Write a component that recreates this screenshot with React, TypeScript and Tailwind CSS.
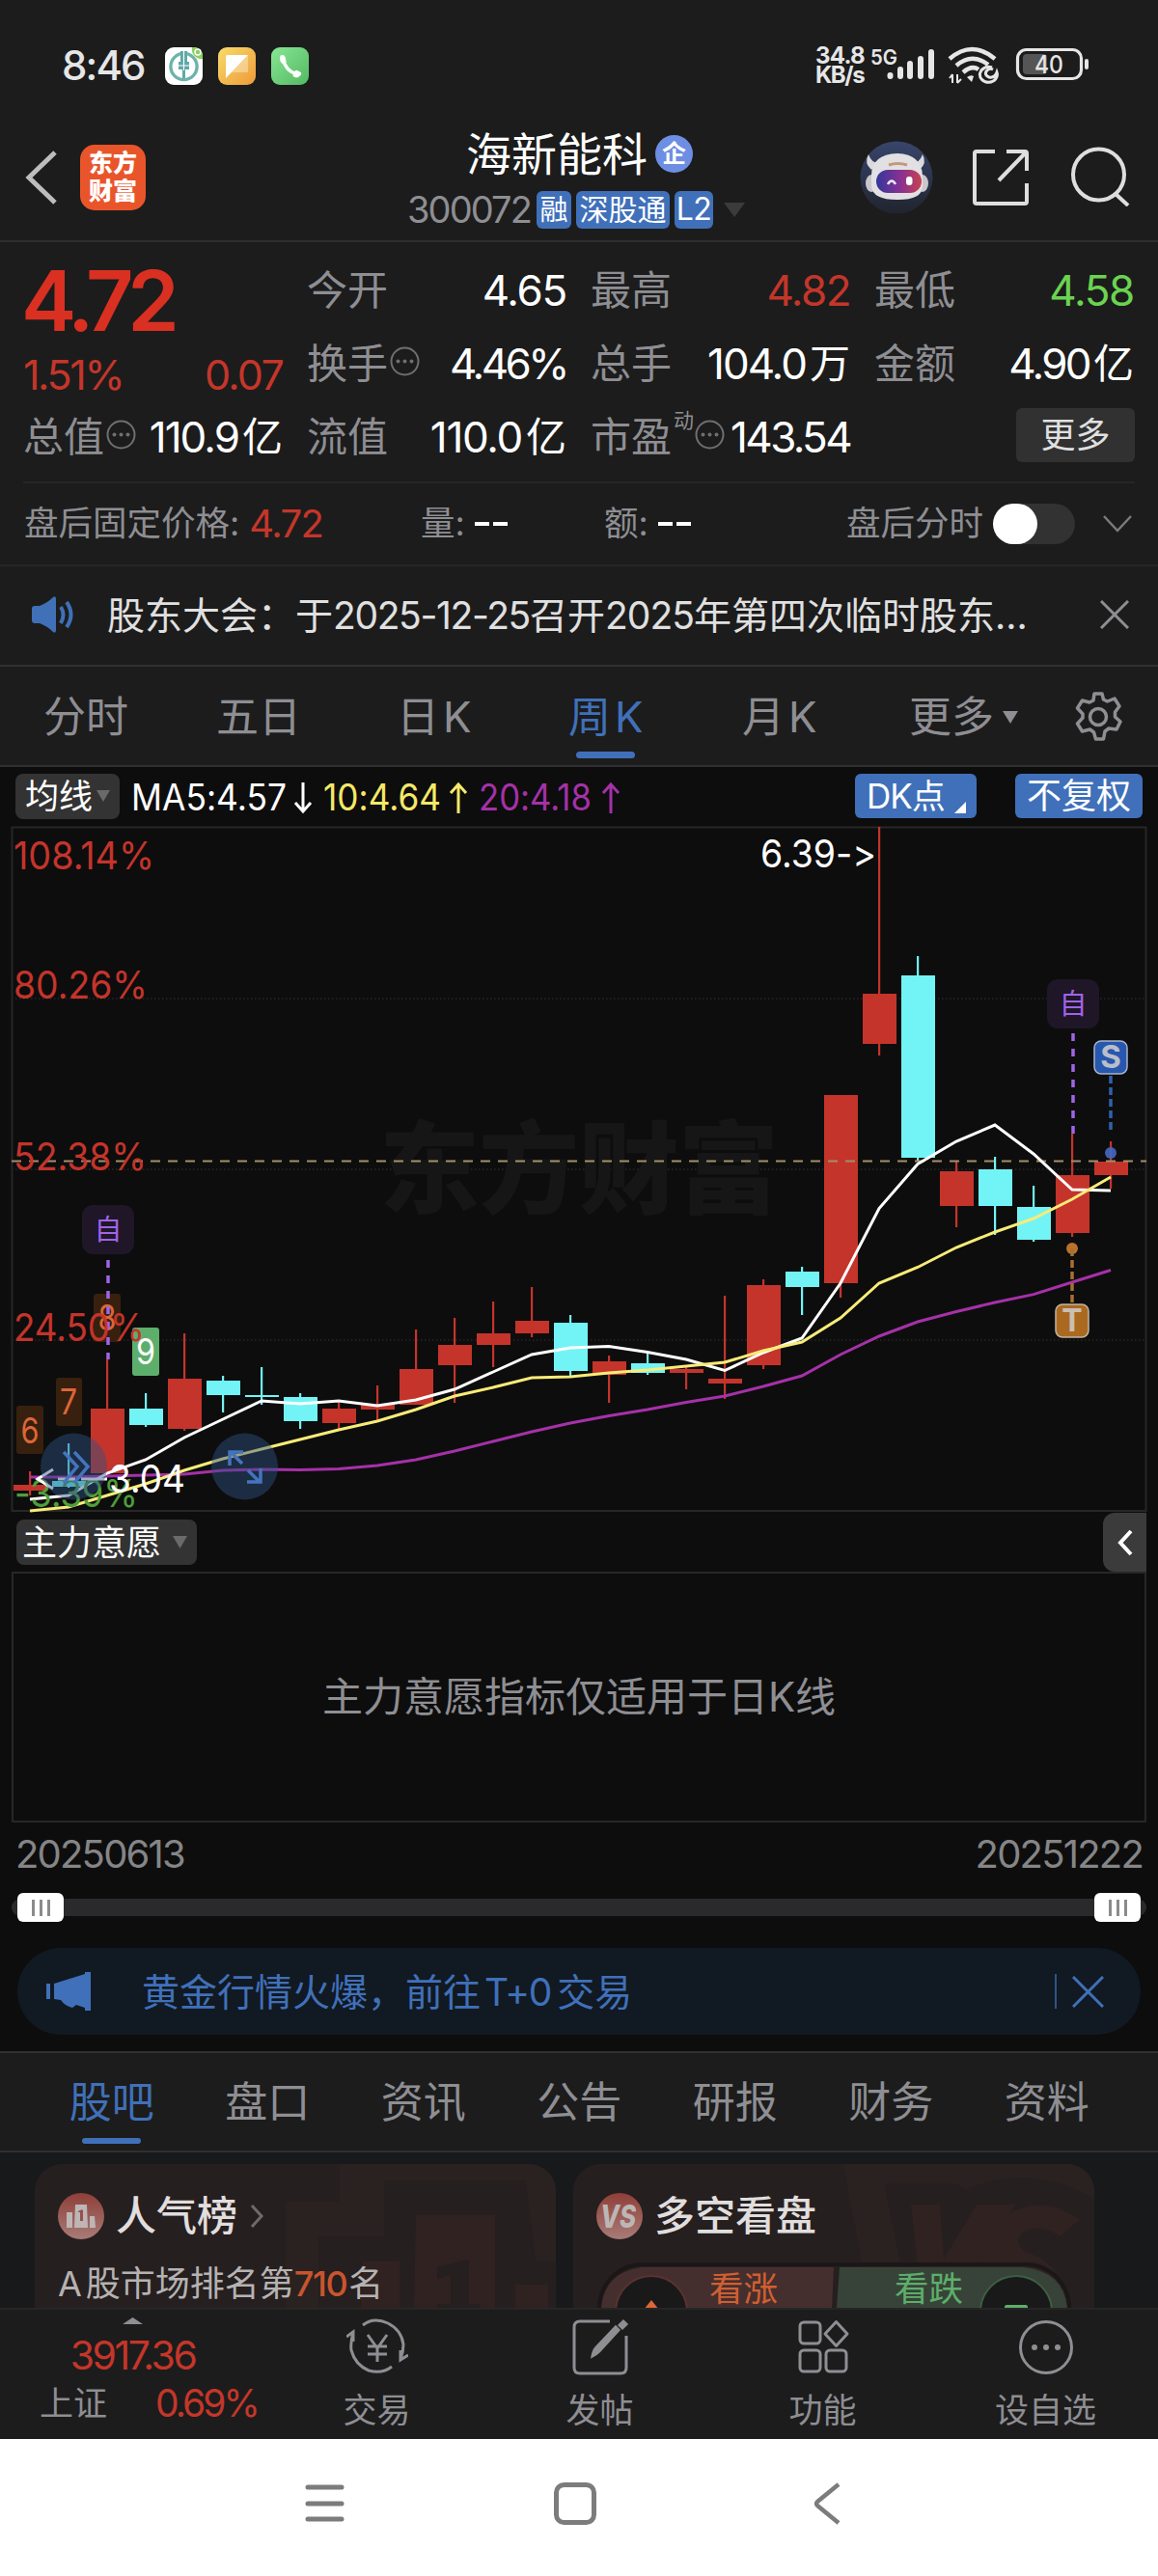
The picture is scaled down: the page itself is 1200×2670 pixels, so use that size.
import React from 'react'
import { clsx } from 'clsx'

// [body top, body bottom, wick top, wick bottom, up?]
const candles: [number, number, number, number, boolean][] = [
    [1539, 1545, 1525, 1550, true],
    [1535, 1541, 1496, 1542, false],
    [1460, 1527, 1409, 1527, true],
    [1460, 1477, 1444, 1479, false],
    [1429, 1481, 1382, 1483, true],
    [1431, 1446, 1426, 1464, false],
    [1446, 1448, 1417, 1456, false],
    [1448, 1473, 1444, 1481, false],
    [1460, 1475, 1454, 1481, true],
    [1456, 1461, 1436, 1472, true],
    [1419, 1456, 1378, 1456, true],
    [1394, 1415, 1366, 1454, true],
    [1382, 1394, 1349, 1417, true],
    [1369, 1382, 1334, 1386, true],
    [1371, 1421, 1363, 1426, false],
    [1411, 1425, 1405, 1454, true],
    [1413, 1423, 1402, 1425, false],
    [1419, 1423, 1417, 1440, true],
    [1429, 1434, 1343, 1450, true],
    [1332, 1415, 1326, 1419, true],
    [1318, 1334, 1313, 1363, false],
    [1135, 1330, 1135, 1345, true],
    [1030, 1082, 857, 1094, true],
    [1011, 1200, 991, 1204, false],
    [1214, 1250, 1204, 1272, true],
    [1212, 1250, 1199, 1280, false],
    [1251, 1285, 1229, 1287, false],
    [1218, 1278, 1175, 1282, true],
    [1204, 1218, 1183, 1232, true],
]

const ma5 = [1554, 1550, 1527, 1513, 1490, 1471, 1452, 1455, 1452, 1457, 1451, 1440, 1422, 1404, 1397, 1395.5, 1401.5, 1409, 1420.5, 1402, 1387, 1330, 1252.5, 1206.5, 1183, 1166, 1196, 1233, 1234]
const ma10 = [1566, 1562, 1550, 1538, 1524, 1512, 1502, 1492, 1482, 1473, 1461, 1447, 1438, 1428, 1427, 1423, 1420, 1416, 1412, 1400, 1391, 1366, 1330, 1313.5, 1293, 1277, 1263, 1243, 1220]
const ma20 = [1531, 1531, 1530, 1529, 1528, 1524, 1523, 1523.5, 1522.5, 1519, 1513, 1504, 1494, 1484, 1475, 1467.5, 1461, 1453.5, 1447, 1437, 1426, 1404, 1385, 1370, 1359.5, 1350, 1341.6, 1329, 1316.5]

const cx = (i: number) => 31 + i * 40
const line = (ys: number[]) => ys.map((y, i) => `${cx(i)},${y}`).join(' ')

const StatusBar = () => {
    return (
        <div className="flex h-[100px] items-center pt-9 pl-[64px] pr-[71px] text-[#e6e6e6]">
            <div className="w-[107px] text-[42px] leading-none font-medium tracking-[-0.045em]">8:46</div>
            <div className="flex gap-4">
                <svg width="39" height="39" viewBox="0 0 39 39">
                    <rect width="39" height="39" rx="9" fill="#fff" />
                    <path d="M28 0h2a9 9 0 0 1 9 9v3a10 10 0 0 1-11-12z" fill="#8bd060" />
                    <circle cx="34" cy="5" r="3" fill="none" stroke="#fff" strokeWidth="1.4" />
                    <circle cx="19.5" cy="20" r="13.6" fill="none" stroke="#6db3ab" strokeWidth="3.4" />
                    <path d="M16 4h7v11h2v8h-4v9h-3v-9h-4v-8h2z" fill="#5fa9a6" />
                    <path d="M19.5 4v20M14 19h11" stroke="#fff" strokeWidth="1.1" />
                </svg>
                <svg width="39" height="39" viewBox="0 0 39 39">
                    <defs>
                        <linearGradient id="note" x1="0" y1="0" x2="1" y2="1">
                            <stop offset="0" stopColor="#f7dc6a" />
                            <stop offset="1" stopColor="#ee9a3a" />
                        </linearGradient>
                    </defs>
                    <rect width="39" height="39" rx="9" fill="url(#note)" />
                    <path d="M31 8v18H14z" fill="#fff" opacity=".35" />
                    <path d="M8 9.500q0-1.500 1.500-1.500H31L8 32z" fill="#fff" />
                </svg>
                <svg width="39" height="39" viewBox="0 0 39 39">
                    <defs>
                        <linearGradient id="call" x1="0" y1="0" x2="1" y2="1">
                            <stop offset="0" stopColor="#86e794" />
                            <stop offset="1" stopColor="#55b862" />
                        </linearGradient>
                    </defs>
                    <rect width="39" height="39" rx="9" fill="url(#call)" />
                    <path d="M12.500 12.500C14 20 19 26 27 28" fill="none" stroke="#fff" strokeWidth="3.500" />
                    <path d="M9.500 8.500q4-1.500 5 1.500l1 4q.5 2-3 3.500-5-3-3-9zM23 27q2-4 4-3l3 1.500q2.500 1.500 0 4-3.500 3.500-7.500.5z" fill="#fff" />
                </svg>
            </div>
            <div className="ml-auto flex items-center">
                <div className="w-[54px] text-[24px] leading-[20px] font-bold tracking-[-0.03em] whitespace-nowrap">
                    <div>34.8</div>
                    <div className="tracking-[-0.06em]">KB/s</div>
                </div>
                <svg width="230" height="40" viewBox="899 49 230 40">
                    <text x="902" y="68" fontSize="22" fontWeight="600" fill="#e6e6e6" textLength="28" lengthAdjust="spacingAndGlyphs">5G</text>
                    <path d="M922.500 80v-1M933 80v-7M943 80v-13M954 80v-18M965 80v-25" stroke="#e6e6e6" strokeWidth="6" strokeLinecap="round" />
                    <g fill="none" stroke="#e6e6e6" strokeWidth="4.500">
                        <path d="M984 62q23-20 47 0M991 69q16-14 33-1M998 76q9-8 16-3" />
                        <path d="M1028 71a9 8 0 1 0 5 5q-2 6-8 5-5-2-3-6 3-4 7-2" strokeWidth="3" />
                        <path d="M987 78v9M992 78v9M984 82l3-4M992 87l4-4" strokeWidth="2" />
                    </g>
                    <path d="M1002 81q4-3 7-1l-2 6z" fill="#e6e6e6" />
                    <rect x="1054.500" y="52.500" width="66" height="30" rx="9" fill="none" stroke="#e6e6e6" strokeWidth="3.200" />
                    <rect x="1060" y="57" width="25" height="21" rx="4" fill="#555" />
                    <rect x="1124" y="62" width="4" height="11" rx="2" fill="#e6e6e6" />
                    <text x="1072" y="77" fontSize="26" fontWeight="500" fill="#e6e6e6" textLength="30" lengthAdjust="spacingAndGlyphs">40</text>
                </svg>
            </div>
        </div>
    )
}

const Header = () => {
    return (
        <div className="flex h-[151px] border-b-2 border-[#2e2e2f] pl-6">
            <svg className="mt-14 h-14 w-9" viewBox="0 0 36 56" fill="none" stroke="#bdbdbd" strokeWidth="5">
                <path d="M33 2L6 28l27 26" />
            </svg>
            <div className="mt-[50px] ml-[23px] flex h-[68px] w-[68px] flex-col items-center justify-center rounded-[15px] bg-[#e9552b] text-[25px] leading-[29px] font-black text-white">
                <span>东方</span>
                <span>财富</span>
            </div>
            <div className="mt-8 ml-[271px] w-[420px]">
                <div className="flex h-[54px] items-center pl-[61px] text-[47px] leading-none text-white">
                    海新能科
                    <span className="ml-2 flex h-[39px] w-[39px] items-center justify-center rounded-full bg-[#6d8ee2] text-[25px] font-bold">企</span>
                </div>
                <div className="mt-[11px] flex h-[40px] items-center text-[32px] leading-none text-white">
                    <span className="w-[134px] text-[38px] tracking-[-0.05em] text-[#8e8e93]">300072</span>
                    <span className="flex h-[39px] w-9 items-center justify-center rounded-md bg-[#4070b9] text-[29px]">融</span>
                    <span className="ml-[5px] flex h-[39px] w-[97px] items-center justify-center rounded-md bg-[#4070b9] text-[30px]">深股通</span>
                    <span className="ml-[5px] flex h-[39px] w-10 items-center justify-center rounded-md bg-[#4070b9] tracking-[-0.02em]">L2</span>
                    <svg className="ml-[11px]" width="22" height="15" viewBox="0 0 22 15"><path d="M0 0h22L11 15z" fill="#3b3b3b" /></svg>
                </div>
            </div>
            <svg className="mt-[46px] ml-[49px] shrink-0" width="76" height="76" viewBox="0 0 76 76">
                <defs>
                    <linearGradient id="visor" x1="0" y1="0" x2="1" y2="0">
                        <stop offset="0" stopColor="#33379c" />
                        <stop offset=".55" stopColor="#8a3191" />
                        <stop offset="1" stopColor="#c8414f" />
                    </linearGradient>
                    <linearGradient id="halo" x1="0" y1="0" x2="0" y2="1">
                        <stop offset="0" stopColor="#38456b" />
                        <stop offset="1" stopColor="#20242e" />
                    </linearGradient>
                </defs>
                <circle cx="38" cy="38" r="37.500" fill="url(#halo)" />
                <path d="M9 14q-5 9 3 16l8-7q-8 0-11-9zM65 14q5 9-3 16l-8-7q8 0 11-9z" fill="#dcd9dd" />
                <ellipse cx="12" cy="44" rx="6" ry="9" fill="#c9c6cc" />
                <ellipse cx="65" cy="44" rx="6" ry="9" fill="#c9c6cc" />
                <path d="M12 36q0-22 27-23 25 1 26 23v11q0 14-26 14T12 47z" fill="#e3e0e3" />
                <rect x="17" y="30" width="47" height="24" rx="12" fill="url(#visor)" />
                <path d="M30 25q9-3 19 0" stroke="#c09a7a" strokeWidth="3" fill="none" />
                <path d="M29 45q4-7 8 0" stroke="#ece6ff" strokeWidth="2.500" fill="none" />
                <rect x="48" y="37" width="6.500" height="9" rx="3" fill="#fff" />
            </svg>
            <svg className="mt-[54px] ml-10 shrink-0" width="60" height="60" viewBox="0 0 60 60" fill="none" stroke="#dedede" strokeWidth="4" strokeLinejoin="round">
                <path d="M24 3H5q-2 0-2 2v50q0 2 2 2h50q2 0 2-2V36M36 3h19q2 0 2 2v18M56 4L28 33" />
            </svg>
            <svg className="mt-[52px] ml-[43px] shrink-0" width="62" height="62" viewBox="0 0 62 62" fill="none" stroke="#dedede" strokeWidth="4">
                <circle cx="28.500" cy="29" r="26.500" />
                <path d="M46 49l13 12" />
            </svg>
        </div>
    )
}

const Dots = () => {
    return (
        <svg className="ml-[2px] -mt-[5px] shrink-0" width="31" height="31" viewBox="0 0 31 31" fill="#6f6f72">
            <circle cx="15.500" cy="15.500" r="14" fill="none" stroke="#6f6f72" strokeWidth="2" />
            <circle cx="8.500" cy="15.500" r="2" />
            <circle cx="15.500" cy="15.500" r="2" />
            <circle cx="22.500" cy="15.500" r="2" />
        </svg>
    )
}

const Quote = ({ label, value, unit, dots, sup, color = 'text-white', tight = 'tracking-[-0.045em]' }: any) => {
    return (
        <div className="flex h-[76px] w-[269px] items-center text-[42px] leading-none whitespace-nowrap">
            <span className="text-[#8e8e93]">{label}</span>
            {sup && <span className="-mt-9 ml-[2px] -mr-[1px] text-[21px] text-[#8e8e93]">{sup}</span>}
            {dots && <Dots />}
            <span className={clsx('ml-auto text-[44px]', tight, color)}>{value}</span>
            {unit && <span className="ml-1 text-white">{unit}</span>}
        </div>
    )
}

const QuotePanel = () => {
    return (
        <div className="mx-6 flex h-[250px] gap-[25px] border-b-2 border-[#262627] pt-3">
            <div className="w-[269px]">
                <div className="-ml-[2px] flex h-[98px] items-center text-[86px] leading-none font-semibold tracking-[-0.075em] text-[#d93022]">4.72</div>
                <div className="flex h-[54px] items-center justify-between text-[43px] leading-none tracking-[-0.055em] text-[#c4362a]">
                    <span>1.51%</span>
                    <span className="tracking-[-0.04em]">0.07</span>
                </div>
                <Quote label="总值" dots value="110.9" unit="亿" />
            </div>
            <div>
                <Quote label="今开" value="4.65" tight="tracking-[-0.03em]" />
                <Quote label="换手" dots value="4.46%" tight="tracking-[-0.08em]" />
                <Quote label="流值" value="110.0" unit="亿" tight="tracking-[-0.03em]" />
            </div>
            <div>
                <Quote label="最高" value="4.82" color="text-[#c4362a]" tight="tracking-[-0.035em]" />
                <Quote label="总手" value="104.0" unit="万" />
                <Quote label="市盈" sup="动" dots value="143.54" tight="tracking-[-0.06em]" />
            </div>
            <div>
                <Quote label="最低" value="4.58" color="text-[#6bd351]" tight="tracking-[-0.03em]" />
                <Quote label="金额" value="4.90" unit="亿" tight="tracking-[-0.06em]" />
                <div className="mt-[8px] ml-[147px] flex h-14 w-[123px] items-center justify-center rounded-md bg-[#313131] text-[36px] leading-none text-[#e0e0e0]">更多</div>
            </div>
        </div>
    )
}

const AfterHours = () => {
    return (
        <div className="flex h-[86px] items-center border-b-2 border-[#262627] pl-[25px] text-[35.500px] leading-none text-[#8e8e93]">
            <div className="flex w-[411px] items-center">盘后固定价格:<span className="ml-[10px] text-[40px] tracking-[-0.04em] text-[#c4362a]">4.72</span></div>
            <div className="flex w-[190px] items-center">量:<Dash /></div>
            <div className="flex w-[251px] items-center">额:<Dash /></div>
            <span>盘后分时</span>
            <div className="ml-[11px] h-[42px] w-[84px] rounded-full bg-[#323232]">
                <div className="-ml-px h-[42px] w-[46px] rounded-full bg-white"></div>
            </div>
            <svg className="ml-7" width="32" height="18" viewBox="0 0 32 18" fill="none" stroke="#7b7b7e" strokeWidth="2.500"><path d="M2 1l14 15L30 1" /></svg>
        </div>
    )
}

const Dash = () => {
    return (
        <span className="ml-[10px] flex gap-1">
            <i className="h-1 w-[15px] bg-white"></i>
            <i className="h-1 w-[15px] bg-white"></i>
        </span>
    )
}

const News = () => {
    return (
        <div className="flex h-[104px] items-center border-b-2 border-[#303031] pb-[2px] pl-8 text-[39px] leading-none text-[#e0e0e0]">
            <svg width="46" height="38" viewBox="0 0 46 38">
                <path d="M1 13q0-3 3-3h5q8-3 14-9 3-2 3 2v32q0 4-3 2-6-6-14-9H4q-3 0-3-3z" fill="#3f70b8" />
                <path d="M31 11q5 8 0 17M37 6q9 13 0 26" fill="none" stroke="#3f70b8" strokeWidth="4" />
            </svg>
            <div className="ml-[33px] w-[1029px] whitespace-nowrap">
                股东大会：于<span className="tracking-[-0.035em]">2025-12-25</span>召开<span className="tracking-[-0.025em]">2025</span>年第四次临时股东...
            </div>
            <svg width="30" height="30" viewBox="0 0 30 30" stroke="#8e8e93" strokeWidth="3"><path d="M1 1l28 28M29 1L1 29" /></svg>
        </div>
    )
}

const PeriodTabs = () => {
    return (
        <div className="flex h-[104px] items-center border-b-2 border-[#303031] pt-[2px] pl-[45px] text-[44px] leading-none text-[#8e8e93]">
            <span className="w-[179px]">分时</span>
            <span className="w-[187px]">五日</span>
            <span className="w-[178px]">日<span className="ml-[4px]">K</span></span>
            <div className="relative w-[180px] text-[#4070b9]">
                周<span className="ml-[4px]">K</span>
                <i className="absolute top-[58px] left-2 h-[7px] w-[61px] rounded bg-[#4070b9]"></i>
            </div>
            <span className="w-[173px]">月<span className="ml-[4px]">K</span></span>
            <span>更多</span>
            <svg className="ml-[9px]" width="16" height="13" viewBox="0 0 16 13"><path d="M0 0h16L8 13z" fill="#8e8e93" /></svg>
            <svg className="ml-[56px]" width="54" height="54" viewBox="0 0 54 54" fill="none" stroke="#8e8e93" strokeWidth="3.500" strokeLinejoin="round">
                <path d="M23 3h8l1.500 6 4 2 7.500-3 5 8-4.500 6v5l5.500 5-4 8-8-1-4 3-1.500 8h-8l-2-7-4-3-8 2-5-8 5.500-6v-4l-5.500-6 5-8 7.500 2 4-2z" />
                <circle cx="27" cy="27" r="8.500" />
            </svg>
        </div>
    )
}

const ChartToolbar = () => {
    return (
        <div className="flex h-[60px] items-center pl-4 text-[38px] leading-none text-white">
            <div className="flex h-[47px] w-[108px] items-center rounded-lg bg-[#333] pl-[10px] text-[35px]">
                均线
                <svg className="ml-1" width="14" height="12" viewBox="0 0 14 12"><path d="M0 0h14L7 12z" fill="#6a6a6a" /></svg>
            </div>
            <svg className="ml-[6px]" width="520" height="50" viewBox="130 800 520 50" fontSize="38">
                <text x="136" y="840" fill="#fff" textLength="161" lengthAdjust="spacingAndGlyphs">MA5:4.57</text>
                <text x="335" y="840" fill="#f6e868" textLength="122" lengthAdjust="spacingAndGlyphs">10:4.64</text>
                <text x="496" y="840" fill="#a531a8" textLength="117" lengthAdjust="spacingAndGlyphs">20:4.18</text>
                <g fill="none" strokeWidth="3">
                    <path d="M314 811v30M306 832l8 9 8-9" stroke="#fff" />
                    <path d="M475 843v-30M467 822l8-9 8 9" stroke="#f6e868" />
                    <path d="M633 843v-30M625 822l8-9 8 9" stroke="#a531a8" />
                </g>
            </svg>
            <div className="ml-[236px] flex h-[46px] w-[126px] items-center rounded-md bg-[#4070b9] pl-3 text-[35px]">
                <span className="tracking-[-0.03em]">DK</span>点
                <svg className="mt-6 ml-[9px]" width="12" height="12" viewBox="0 0 12 12"><path d="M12 0v12H0z" fill="#fff" /></svg>
            </div>
            <div className="ml-10 flex h-[46px] w-[132px] items-center justify-center rounded-md bg-[#4070b9] text-[36px]">不复权</div>
        </div>
    )
}

const KLineChart = () => {
    return (
        <svg className="block" width="1200" height="713" viewBox="0 855 1200 713" fontSize="40">
            <g stroke="#353535" strokeWidth="1.200" strokeDasharray="1.500 2.500">
                <path d="M12 1035H1188M12 1212H1188M12 1389H1188" />
            </g>
            <path d="M12.500 857.500H1187.500V1566H12.500z" fill="none" stroke="#272727" strokeWidth="2" />
            <text x="393" y="1250" fontSize="104" fontWeight="900" fill="#161616" textLength="414">东方财富</text>

            {candles.map(([top, bottom, high, low, up], i) => (
                <g key={i} fill={up ? '#c4342b' : '#72f4f6'}>
                    <rect x={cx(i) - 1} y={high} width="2.200" height={low - high} />
                    <rect x={cx(i) - 17} y={top} width="35" height={bottom - top} />
                </g>
            ))}
            <path d="M12 1203.500H1188" stroke="#a58e68" strokeWidth="1.800" strokeDasharray="10 8" />
            <g fill="none" strokeWidth="3">
                <polyline points={line(ma20)} stroke="#a531a8" />
                <polyline points={line(ma5)} stroke="#fff" />
                <polyline points={line(ma10)} stroke="#f8ec78" />
            </g>

            {/* sequence counters */}
            <g textAnchor="middle" fontSize="37" fill="#dd6637">
                <rect x="17" y="1457" width="28" height="50" rx="3" fill="#38200f" />
                <text x="31" y="1496" textLength="19" lengthAdjust="spacingAndGlyphs">6</text>
                <rect x="58" y="1428" width="27" height="50" rx="3" fill="#38200f" />
                <text x="71" y="1466" textLength="18" lengthAdjust="spacingAndGlyphs">7</text>
                <rect x="97" y="1341" width="28" height="50" rx="3" fill="#38200f" />
                <text x="111" y="1379" textLength="19" lengthAdjust="spacingAndGlyphs">8</text>
                <rect x="137" y="1376" width="28" height="50" rx="3" fill="#5dae6b" />
                <text x="151" y="1414" fill="#fff" textLength="20" lengthAdjust="spacingAndGlyphs">9</text>
            </g>

            {/* watch-list markers */}
            <g fill="#a064e8" fontSize="29" textAnchor="middle">
                <rect x="85" y="1249" width="54" height="51" rx="11" fill="#1f1628" />
                <text x="112" y="1285">自</text>
                <rect x="1085" y="1015" width="54" height="51" rx="11" fill="#1f1628" />
                <text x="1112" y="1051">自</text>
                <path d="M112 1306v103M1112 1071v104" stroke="#a064e8" strokeWidth="3.500" strokeDasharray="8 8" />
            </g>

            <g fill="#c4342b">
                <text x="14" y="901" textLength="146" lengthAdjust="spacingAndGlyphs">108.14%</text>
                <text x="14" y="1035" textLength="139" lengthAdjust="spacingAndGlyphs">80.26%</text>
                <text x="14" y="1213" textLength="138" lengthAdjust="spacingAndGlyphs">52.38%</text>
                <text x="14" y="1390" textLength="136" lengthAdjust="spacingAndGlyphs">24.50%</text>
                <text x="15" y="1562" fill="#4f9d3c" textLength="128" lengthAdjust="spacingAndGlyphs">-3.39%</text>
            </g>
            <g fill="#fff">
                <text x="788" y="899" textLength="120" lengthAdjust="spacingAndGlyphs">6.39-&gt;</text>
                <path d="M55 1523l-16 10 16 10M60 1533h18M84 1533h27" fill="none" stroke="#fff" strokeWidth="3" />
                <text x="113" y="1547" textLength="79" lengthAdjust="spacingAndGlyphs">3.04</text>
            </g>

            <g fill="none" stroke="#4474bd" strokeWidth="3.500">
                <circle cx="76.500" cy="1520" r="34.500" fill="#2f5186" fillOpacity=".45" stroke="none" />
                <circle cx="253.500" cy="1520" r="34.500" fill="#2f5186" fillOpacity=".45" stroke="none" />
                <path d="M66 1505l14 15-14 17M77 1505l14 15-14 17" />
                <path d="M238 1519v-14h14M239 1505l12 12M270 1522v14h-14M269 1536l-12-12" />
            </g>

            {/* sell / trade pins */}
            <circle cx="1151" cy="1195" r="6" fill="#4668c4" fillOpacity=".9" />
            <path d="M1151 1115v57" stroke="#2f62ae" strokeWidth="3.500" strokeDasharray="8 4" />
            <rect x="1134" y="1079" width="34" height="34" rx="7" fill="#2857b0" stroke="#a9b4c8" strokeWidth="1.500" />
            <text x="1151" y="1107" fontSize="33" fontWeight="700" fill="#b9bec9" textAnchor="middle">S</text>
            <circle cx="1111" cy="1294" r="6" fill="#b9722c" />
            <path d="M1111 1294v56" stroke="#a8702f" strokeWidth="3.500" strokeDasharray="8 4" />
            <rect x="1094" y="1352" width="34" height="34" rx="7" fill="#ab6920" stroke="#c2b5a4" strokeWidth="1.500" />
            <text x="1111" y="1380" fontSize="32" fontWeight="700" fill="#c9bfb2" textAnchor="middle">T</text>
        </svg>
    )
}

const Handle = () => {
    return (
        <div className="flex h-[30px] w-12 items-center justify-center gap-[5px] rounded-md bg-white">
            <i className="h-[17px] w-[3px] bg-[#8b8b8b]"></i>
            <i className="h-[17px] w-[3px] bg-[#8b8b8b]"></i>
            <i className="h-[17px] w-[3px] bg-[#8b8b8b]"></i>
        </div>
    )
}

const Indicator = () => {
    return (
        <>
            <div className="flex h-[61px] pl-[17px] text-white">
                <div className="mt-[7px] flex h-[47px] w-[187px] items-center rounded-lg bg-[#333] pl-[6px] text-[36px] leading-none">
                    主力意愿
                    <svg className="ml-[12px]" width="15" height="13" viewBox="0 0 15 13"><path d="M0 0h15L7.500 13z" fill="#6a6a6a" /></svg>
                </div>
                <div className="ml-[939px] flex h-[61px] w-[45px] items-center justify-center rounded-l-xl bg-[#3b3b3c]">
                    <svg width="16" height="28" viewBox="0 0 16 28" fill="none" stroke="#fff" strokeWidth="4"><path d="M14 2L3 14l11 12" /></svg>
                </div>
            </div>
            <div className="mx-3 flex h-[260px] items-center justify-center border-2 border-[#272727] text-[42px] leading-none text-[#8e8e93]">主力意愿指标仅适用于日K线</div>
            <div className="flex h-[73px] items-center justify-between px-4 pb-[8px] text-[40px] leading-none tracking-[-0.045em] text-[#858587]">
                <span>20250613</span>
                <span>20251222</span>
            </div>
            <div className="mx-3 mt-[6px] flex h-[18px] items-center justify-between rounded-full bg-[#2a2a2c] px-[6px]">
                <Handle />
                <Handle />
            </div>
            <div className="mx-[18px] mt-[33px] flex h-[90px] items-center rounded-full bg-[#111922] pl-[30px] text-[39px] leading-none text-[#4070b9]">
                <svg width="46" height="40" viewBox="0 0 46 40" fill="#4070b9">
                    <path d="M0 12h4v16H0zM8 12L40 2V0h6v40h-6v-3l-9-3-4 3q-8-2-12-8l-7-1z" />
                </svg>
                <span className="ml-[53px] w-[946px] whitespace-nowrap">黄金行情火爆，前往<span className="ml-[4px] text-[39px] tracking-[-0.03em]">T+0</span><span className="ml-[6px]">交易</span></span>
                <i className="h-9 w-[2px] bg-[#2f5388]"></i>
                <svg className="ml-4" width="33" height="33" viewBox="0 0 33 33" stroke="#4070b9" strokeWidth="3"><path d="M1 1l31 31M32 1L1 32" /></svg>
            </div>
        </>
    )
}

const tabs = ['股吧', '盘口', '资讯', '公告', '研报', '财务', '资料']

const InfoTabs = () => {
    return (
        <div className="flex h-[105px] border-y-2 border-[#303031] bg-[#1c1c1c] pl-[35px]">
            {tabs.map((tab, i) => (
                <div key={tab} className={clsx('flex w-[161.500px] flex-col items-center text-[44px] leading-none', i === 0 ? 'text-[#4070b9]' : 'text-[#8e8e93]')}>
                    <span className="mt-[29px]">{tab}</span>
                    {i === 0 && <i className="mt-[15px] h-[6px] w-[61px] rounded bg-[#4070b9]"></i>}
                </div>
            ))}
        </div>
    )
}

const Cards = () => {
    return (
        <div className="flex h-[161px] gap-[18px] overflow-hidden bg-[#18191b] px-9 pt-3">
            <div className="relative h-[200px] w-[540px] overflow-hidden rounded-[28px] bg-[#261f1f]">
                <svg className="absolute top-0 right-0" width="280" height="149" viewBox="296 2243 280 149">
                    <path d="M354 2243H576V2344H555L545 2260H398V2318H330V2392H296V2282H352V2243z" fill="#2a2220" />
                    <path d="M431 2296h82v96h-84zM376 2344h38v48h-40zM534 2368h34v24h-34z" fill="#302221" />
                    <path d="M453 2350l33-8v46h11v4h-44v-4h14v-30l-14 4z" fill="#251f1f" />
                </svg>
                <div className="relative flex h-[48px] translate-y-[30px] items-center pl-6">
                    <svg width="48" height="48" viewBox="0 0 48 48">
                        <defs>
                            <linearGradient id="badge" x1="0" y1="0" x2="0" y2="1">
                                <stop offset="0" stopColor="#8f3f38" />
                                <stop offset="1" stopColor="#a87b78" />
                            </linearGradient>
                        </defs>
                        <circle cx="24" cy="24" r="24" fill="url(#badge)" />
                        <path d="M18 12h12l1 24H17zM9 20h6v16H9zM33 24h5l1 12h-6z" fill="#bdb6b5" />
                        <path d="M21 19l3-1.500h2V29h-3v-9h-2z" fill="#97504b" />
                    </svg>
                    <span className="ml-[12px] text-[42px] leading-none font-medium text-[#e0dede]">人气榜</span>
                    <svg className="ml-[13px]" width="15" height="24" viewBox="0 0 15 24" fill="none" stroke="#6e6a6a" strokeWidth="3"><path d="M2 1l10 11L2 23" /></svg>
                </div>
                <div className="relative mt-[58px] pl-6 text-[36px] leading-none text-[#b5b2b2]">A<span className="ml-1">股市场排名第</span><span className="font-medium tracking-[-0.04em] text-[#c9552f]">710</span><span className="ml-[2px]">名</span></div>
            </div>
            <div className="relative h-[200px] w-[540px] overflow-hidden rounded-[28px] bg-[#261f1f]">
                <svg className="absolute top-0 left-0" width="540" height="149" viewBox="594 2243 540 149">
                    <path d="M874 2243h260v36q-50-30-110-18l-24 8-10-6h-74l18 88h-40z" fill="#2a2220" />
                    <path d="M944 2285h30l4 56 34-56h40l-44 75h-56z" fill="#302221" />
                    <path d="M1012 2350l28-50q20-20 55-12l24 12-20 18q-22-14-38-5-14 14 7 23 34 12 38 56h-40z" fill="#302221" />
                    <rect x="621" y="2347" width="487" height="90" rx="45" fill="none" stroke="#1b1718" strokeWidth="4" />
                    <path d="M864 2350H664q-38 6-41 42h239z" fill="#452f2e" />
                    <path d="M870 2350h190q42 4 46 42H867z" fill="#374338" />
                    <circle cx="675" cy="2396" r="37" fill="#19191a" stroke="#5b3230" strokeWidth="2" />
                    <circle cx="1053" cy="2396" r="37" fill="#19191a" stroke="#3e5d44" strokeWidth="2" />
                    <path d="M675 2384l8 10h-16z" fill="#dd6637" />
                    <rect x="1041" y="2389" width="24" height="6" rx="2" fill="#5dae6b" />
                    <text x="735" y="2385" fontSize="35.500" fill="#d05f32">看涨</text>
                    <text x="927" y="2385" fontSize="35.500" fill="#5dae6b">看跌</text>
                    <circle cx="642" cy="2297" r="24" fill="url(#badge)" />
                    <text x="622" y="2309" fontSize="33" fontWeight="800" fontStyle="italic" fill="#bdb6b5" textLength="37" lengthAdjust="spacingAndGlyphs">VS</text>
                    <text x="678" y="2312" fontSize="42" fontWeight="500" fill="#e0dede">多空看盘</text>
                </svg>
            </div>
        </div>
    )
}

const BarItem = ({ label, children }: any) => {
    return (
        <div className="flex w-[231px] flex-col items-center pt-2">
            <svg width="64" height="60" viewBox="0 0 64 60" fill="none" stroke="#8e8e93" strokeWidth="3">{children}</svg>
            <span className="mt-[16px] text-[35px] leading-[40px] text-[#8e8e93]">{label}</span>
        </div>
    )
}

const BottomBar = () => {
    return (
        <div className="flex h-[136px] border-t-2 border-[#262626] bg-[#1c1c1c]">
            <div className="flex w-[275px] flex-col items-center">
                <svg className="mt-2" width="21" height="7" viewBox="0 0 21 7"><path d="M10.500 0L21 7H0z" fill="#8e8e93" /></svg>
                <span className="mt-3 text-[41px] leading-[40px] tracking-[-0.06em] text-[#c4362a]">3917.36</span>
                <div className="mt-[10px] flex w-full items-center pl-[41px] leading-[40px]">
                    <span className="text-[35px] text-[#8e8e93]">上证</span>
                    <span className="ml-[50px] text-[39px] tracking-[-0.075em] text-[#c4362a]">0.69%</span>
                </div>
            </div>
            <BarItem label="交易">
                <path d="M17 8q11-9 26-2 14 7 16 22 0 8-3 15M47 51q-10 8-24 4Q9 49 5 34q-1-9 2-18M0 20l7-5v10M64 39l-8 5v-10" />
                <path d="M22 18l10 14 10-14M32 32v14M22 30h20M22 38h20" />
            </BarItem>
            <BarItem label="发帖">
                <path d="M42 4H11q-6 0-6 6v42q0 6 6 6h42q6 0 6-6V19" />
                <path d="M24 40q1-6 4-9l20-21 3 3-20 22q-3 3-7 5zM52 8l4-4 3 3-4 4z" fill="#8e8e93" />
            </BarItem>
            <BarItem label="功能">
                <rect x="8" y="5" width="21" height="22" rx="4" />
                <rect x="8" y="34" width="21" height="22" rx="4" />
                <rect x="35" y="34" width="21" height="22" rx="4" />
                <path d="M45.500 4.500L57 17 45.500 29.500 34 17z" strokeLinejoin="round" />
            </BarItem>
            <BarItem label="设自选">
                <circle cx="32" cy="31" r="26.500" />
                <g fill="#8e8e93" stroke="none">
                    <circle cx="20" cy="31" r="3" />
                    <circle cx="32" cy="31" r="3" />
                    <circle cx="44" cy="31" r="3" />
                </g>
            </BarItem>
        </div>
    )
}

const SystemNav = () => {
    return (
        <div className="flex h-[142px] bg-white pt-[45px] pl-[315px]">
            <svg width="43" height="44" viewBox="0 0 43 44" stroke="#7c7c7c" strokeWidth="5" strokeLinecap="round"><path d="M4 5h35M4 22h35M4 38h35" /></svg>
            <svg className="ml-[216px]" width="44" height="44" viewBox="0 0 44 44" fill="none" stroke="#7c7c7c" strokeWidth="5"><rect x="2.500" y="2.500" width="39" height="39" rx="8" /></svg>
            <svg className="ml-[225px]" width="28" height="44" viewBox="0 0 28 44" fill="none" stroke="#7c7c7c" strokeWidth="4.500" strokeLinejoin="round"><path d="M26 2L4 20q-2 2 0 4l22 18" /></svg>
        </div>
    )
}

const App = () => {
    return (
        <div className="h-[2670px] w-[1200px] overflow-hidden bg-[#1c1c1c] font-['Inter','Noto_Sans_CJK_SC',sans-serif] [font-feature-settings:'calt'_0]">
            <StatusBar />
            <Header />
            <QuotePanel />
            <AfterHours />
            <News />
            <PeriodTabs />
            <div className="h-[1331px] bg-[#0d0d0d]">
                <ChartToolbar />
                <KLineChart />
                <Indicator />
            </div>
            <InfoTabs />
            <Cards />
            <BottomBar />
            <SystemNav />
        </div>
    )
}

export default App
